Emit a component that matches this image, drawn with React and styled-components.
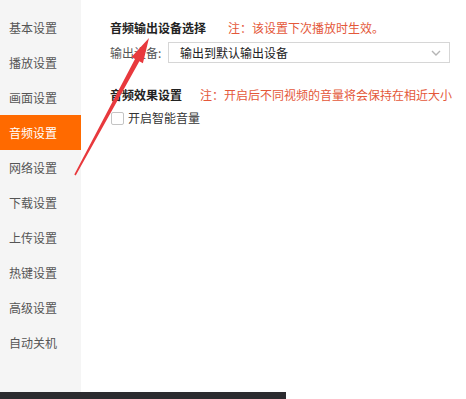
import styled, { createGlobalStyle } from "styled-components";

const GlobalStyle = createGlobalStyle`
    html, body {
        margin: 0;
        padding: 0;
        background: #ffffff;
    }
    body {
        font-family: "Noto Sans CJK SC", "Noto Sans", sans-serif;
    }
`

const menu = ["基本设置", "播放设置", "画面设置", "音频设置", "网络设置", "下载设置", "上传设置", "热键设置", "高级设置", "自动关机"];

export default function App() {
    return (
        <Page>
            <GlobalStyle />
            <Body>
                <Sidebar>
                    {menu.map(item => (
                        <MenuItem key={item} active={item === "音频设置"}>{item}</MenuItem>
                    ))}
                </Sidebar>
                <Main>
                    <TitleRow>
                        <Title>音频输出设备选择</Title>
                        <Note gap={22}>注：该设置下次播放时生效。</Note>
                    </TitleRow>
                    <FieldRow>
                        <Label>输出设备:</Label>
                        <Select>
                            <span>输出到默认输出设备</span>
                            <svg width="10" height="6" viewBox="0 0 10 6">
                                <path d="M1 1 L5 5 L9 1" fill="none" stroke="#b5b5b5" strokeWidth="1.4" />
                            </svg>
                        </Select>
                    </FieldRow>
                    <TitleRow second>
                        <Title>音频效果设置</Title>
                        <Note gap={18}>注：开启后不同视频的音量将会保持在相近大小</Note>
                    </TitleRow>
                    <CheckRow>
                        <Box />
                        <CheckLabel>开启智能音量</CheckLabel>
                    </CheckRow>
                </Main>
                <Arrow width="466" height="399" viewBox="0 0 466 399">
                    <polygon
                        points="74.3,174.6 135.0,58.9 131.5,57.0 149,38 142.9,63.2 139.4,61.3 75.7,175.4"
                        fill="#e8393d"
                    />
                </Arrow>
            </Body>
            <BottomBar />
        </Page>
    )
}

const Arrow = styled.svg`
    position: absolute;
    left: 0;
    top: 0;
    pointer-events: none;
`

const BottomBar = styled.div`
    width: 286px;
    height: 7px;
    background-color: #2b2b2f;
`

const CheckLabel = styled.span`
    font-size: 12px;
    color: #333;
    line-height: 14px;
`

const Box = styled.span`
    width: 11px;
    height: 11px;
    border: 1px solid #c4c4c4;
    border-radius: 2px;
    background: #fff;
`

const CheckRow = styled.div`
    display: flex;
    align-items: center;
    gap: 4px;
    margin-top: 9px;
    margin-left: 1px;
`

const Select = styled.div`
    width: 282px;
    height: 21px;
    box-sizing: border-box;
    border: 1px solid #d6d6d6;
    display: flex;
    align-items: center;
    justify-content: space-between;
    padding: 0 8px 0 11px;
    font-size: 12px;
    color: #222;
`

const Label = styled.span`
    width: 58px;
    font-size: 12px;
    color: #555;
`

const FieldRow = styled.div`
    display: flex;
    align-items: center;
    margin-top: 7px;
`

const Note = styled.span`
    margin-left: ${props => props.gap}px;
    font-size: 12px;
    color: #e4583a;
    white-space: nowrap;
`

const Title = styled.span`
    font-size: 12px;
    font-weight: 700;
    color: #222;
`

const TitleRow = styled.div`
    display: flex;
    align-items: center;
    height: 16px;
    margin-top: ${props => props.second ? "23px" : "0"};
`

const Main = styled.div`
    flex: 1;
    padding: 19px 0 0 29px;
    background: #fff;
`

const MenuItem = styled.div`
    height: 35px;
    display: flex;
    align-items: center;
    padding-left: 9px;
    font-size: 12px;
    color: ${props => props.active ? "#ffffff" : "#555555"};
    background-color: ${props => props.active ? "#ff6a00" : "transparent"};
`

const Sidebar = styled.div`
    width: 81px;
    background-color: #f5f5f5;
    padding-top: 10px;
    box-sizing: border-box;
`

const Body = styled.div`
    display: flex;
    height: 392px;
    position: relative;
`

const Page = styled.div`
    width: 466px;
    height: 399px;
    overflow: hidden;
    position: relative;
`
